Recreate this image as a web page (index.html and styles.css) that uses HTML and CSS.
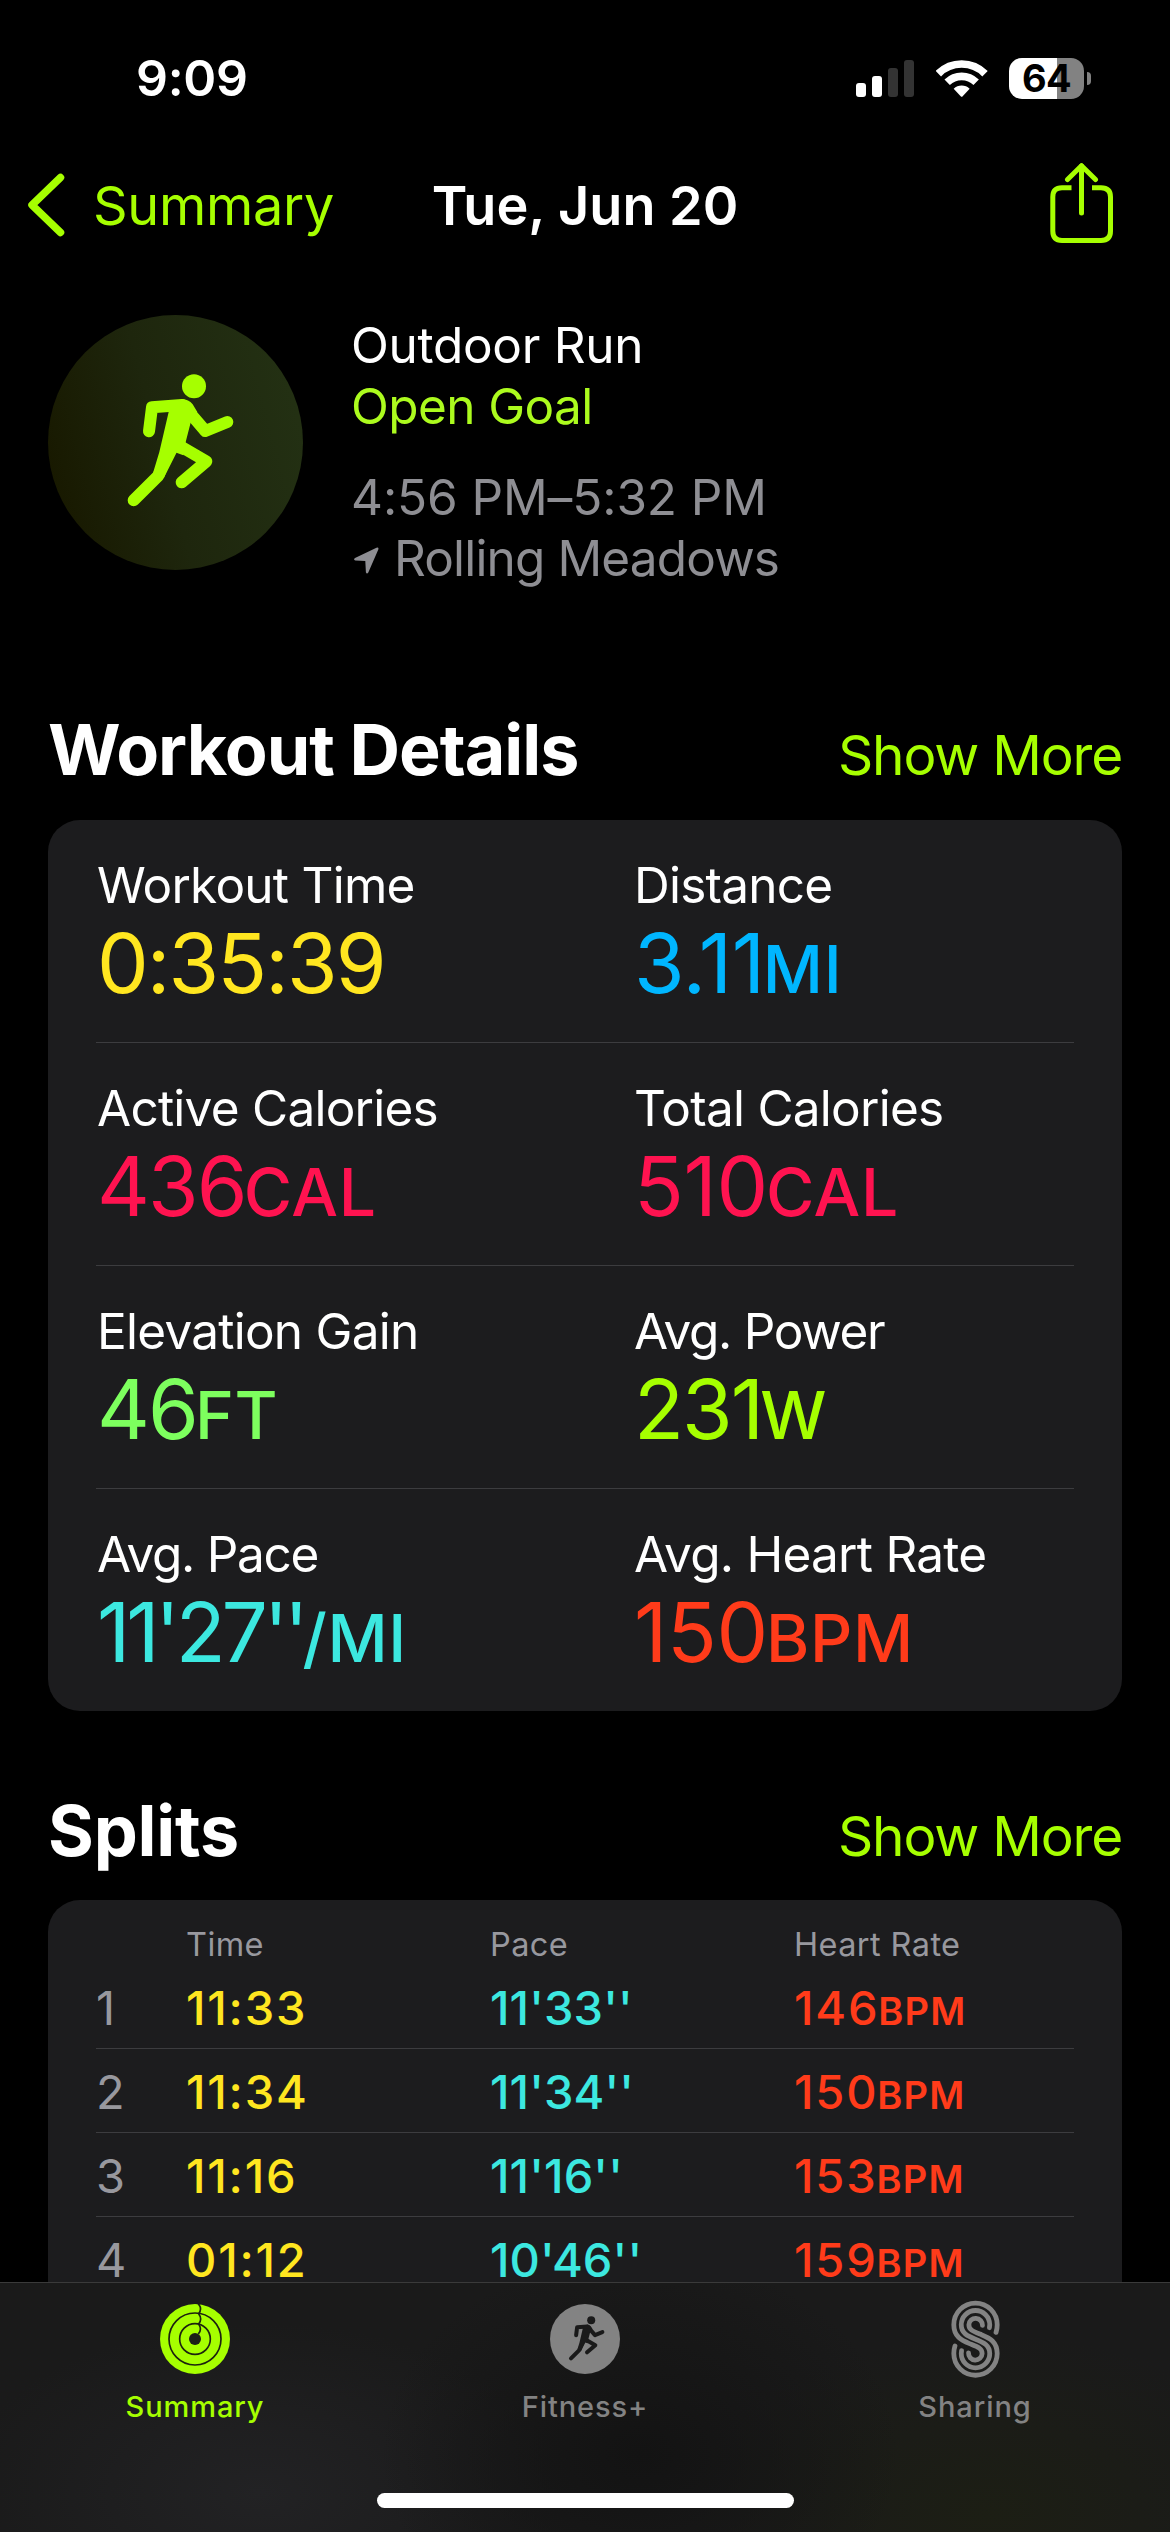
FILE: index.html
```html
<!DOCTYPE html>
<html lang="en">
<head>
    <meta charset="UTF-8">
    <meta name="viewport" content="width=device-width, initial-scale=1.0">
    <title>Tue, Jun 20 - Workout</title>
    <link rel="stylesheet" href="styles.css">
</head>
<body>
    <!-- Shared runner glyph -->
    <svg class="defs" width="0" height="0">
        <defs>
            <g id="runner" fill="none" stroke="currentColor" stroke-width="36" stroke-linecap="round" stroke-linejoin="round">
                <circle cx="462" cy="258" r="36" fill="currentColor" stroke="none"/>
                <path d="M327 393 L336 321 L426 314"/>
                <path d="M436 322 L496 392 L562 365"/>
                <path d="M398 440 L355 526 L281 600"/>
                <path d="M418 436 L499 483 L425 546"/>
                <path d="M386 325 L426 296 Q446 297 458 312 L472 335 L453 363 L438 421 L430 465 L403 455 L372 532 L339 518 L358 455 L386 335 Z" fill="currentColor" stroke="none"/>
            </g>
        </defs>
    </svg>

    <div class="status-bar">
        <div class="clock">9:09</div>
        <div class="status-icons">
            <div class="signal">
                <span class="bar bar-1"></span>
                <span class="bar bar-2"></span>
                <span class="bar bar-3 off"></span>
                <span class="bar bar-4 off"></span>
            </div>
            <svg class="wifi" viewBox="288 57 156 111">
                <g fill="none" stroke="#fff" stroke-width="23">
                    <path d="M295 98 A99 99 0 0 1 435 98"/>
                    <path d="M321.500 124 A62 62 0 0 1 408.500 124"/>
                </g>
                <path d="M341 143 A35 35 0 0 1 389 143 L368 166 Q365 169 362 166 Z" fill="#fff"/>
            </svg>
            <div class="battery">
                <div class="battery-level">64</div>
                <div class="battery-cap"></div>
            </div>
        </div>
    </div>

    <header class="nav">
        <div class="back">
            <svg class="chevron" viewBox="0 0 38 64">
                <path d="M33.500 4.500 L5 32 L33.500 59.500" fill="none" stroke="currentColor" stroke-width="7.500" stroke-linecap="round" stroke-linejoin="round"/>
            </svg>
            <span>Summary</span>
        </div>
        <h1>Tue, Jun 20</h1>
        <svg class="share" viewBox="0 0 64 81">
            <g fill="none" stroke="currentColor" stroke-width="5" stroke-linecap="round" stroke-linejoin="round">
                <path d="M31.500 50 V3"/>
                <path d="M17.500 16.500 L31.500 2.700 L45.500 16.500"/>
                <path d="M21.500 24.700 H12 Q2.800 24.700 2.800 34 V68 Q2.800 77.500 12 77.500 H51 Q60.500 77.500 60.500 68 V34 Q60.500 24.700 51 24.700 H42" stroke-linecap="butt"/>
            </g>
        </svg>
    </header>

    <main>
        <section class="hero">
            <div class="badge">
                <svg viewBox="24 44 765 765"><use href="#runner"/></svg>
            </div>
            <div class="hero-text">
                <div class="activity">Outdoor Run</div>
                <div class="goal">Open Goal</div>
                <div class="hours">4:56 PM–5:32 PM</div>
                <div class="place">
                    <svg viewBox="0 0 25 27">
                        <path d="M22.500 .7 Q25 0 24.300 2.600 L14.300 25.500 Q12.800 27.500 11.900 25.200 L11.300 14 L1.300 13.600 Q-1 12.600 1 11 Z" fill="currentColor"/>
                    </svg>
                    <span>Rolling Meadows</span>
                </div>
            </div>
        </section>

        <section class="details">
            <div class="section-head">
                <h2>Workout Details</h2>
                <a class="more">Show More</a>
            </div>
            <div class="card">
                <div class="detail-row">
                    <div class="detail">
                        <div class="label">Workout Time</div>
                        <div class="value narrow yellow">0:35:39</div>
                    </div>
                    <div class="detail">
                        <div class="label">Distance</div>
                        <div class="value blue">3.11<span class="unit">MI</span></div>
                    </div>
                </div>
                <div class="detail-row">
                    <div class="detail">
                        <div class="label">Active Calories</div>
                        <div class="value narrow pink">436<span class="unit">CAL</span></div>
                    </div>
                    <div class="detail">
                        <div class="label">Total Calories</div>
                        <div class="value pink">510<span class="unit">CAL</span></div>
                    </div>
                </div>
                <div class="detail-row">
                    <div class="detail">
                        <div class="label">Elevation Gain</div>
                        <div class="value narrow green">46<span class="unit">FT</span></div>
                    </div>
                    <div class="detail">
                        <div class="label tight">Avg. Power</div>
                        <div class="value narrow lime">231<span class="unit">W</span></div>
                    </div>
                </div>
                <div class="detail-row">
                    <div class="detail">
                        <div class="label tight">Avg. Pace</div>
                        <div class="value pace cyan">11'27''<span class="unit">/MI</span></div>
                    </div>
                    <div class="detail">
                        <div class="label">Avg. Heart Rate</div>
                        <div class="value red">150<span class="unit">BPM</span></div>
                    </div>
                </div>
            </div>
        </section>

        <section class="splits">
            <div class="section-head">
                <h2>Splits</h2>
                <a class="more">Show More</a>
            </div>
            <div class="card">
                <div class="split-head">
                    <span></span>
                    <span>Time</span>
                    <span>Pace</span>
                    <span>Heart Rate</span>
                </div>
                <div class="split-row">
                    <span class="index">1</span>
                    <span class="yellow">11:33</span>
                    <span class="split-pace cyan">11'33''</span>
                    <span class="red">146<span class="unit">BPM</span></span>
                </div>
                <div class="split-row">
                    <span class="index">2</span>
                    <span class="yellow">11:34</span>
                    <span class="split-pace cyan">11'34''</span>
                    <span class="red">150<span class="unit">BPM</span></span>
                </div>
                <div class="split-row">
                    <span class="index">3</span>
                    <span class="yellow">11:16</span>
                    <span class="split-pace cyan">11'16''</span>
                    <span class="red">153<span class="unit">BPM</span></span>
                </div>
                <div class="split-row">
                    <span class="index">4</span>
                    <span class="yellow">01:12</span>
                    <span class="split-pace cyan">10'46''</span>
                    <span class="red">159<span class="unit">BPM</span></span>
                </div>
            </div>
        </section>
    </main>

    <nav class="tab-bar">
        <div class="tabs">
            <div class="tab active">
                <svg class="round-icon" viewBox="180 102 210 210">
                    <circle cx="285" cy="207" r="105" fill="currentColor"/>
                    <g fill="none" stroke="#1c230f" stroke-width="5">
                        <circle cx="285" cy="207" r="78"/>
                        <circle cx="285" cy="207" r="46"/>
                        <path d="M294 100 Q308 116 296 131 Q308 147 296 162 Q307 178 295 192"/>
                    </g>
                    <circle cx="285" cy="207" r="18" fill="#1c1f17"/>
                </svg>
                <span>Summary</span>
            </div>
            <div class="tab">
                <svg class="round-icon" viewBox="93 113 627 627">
                    <circle cx="406.500" cy="426.500" r="313.500" fill="currentColor"/>
                    <use href="#runner" class="dark-runner"/>
                </svg>
                <span>Fitness+</span>
            </div>
            <div class="tab">
                <svg class="sharing-icon" viewBox="203 85 160 246">
                    <g fill="none" stroke="currentColor" stroke-width="14.500" stroke-linecap="round">
                        <path d="M345 188 Q348.500 178 348.500 165 A65.500 65.500 0 0 0 217.500 165 C217.500 200 240 212 265 222 S303 236 303 252 A20 20 0 0 1 262 250"/>
                        <path d="M325 174 L326 165 A43 43 0 0 0 240 165 C240 190 258 199 283 208.500 S326 228 326 252 A43 43 0 0 1 240 252 L241 243"/>
                        <path d="M304 167 A20 20 0 0 0 263 165 C263 181 276 185 301 195 S348.500 217 348.500 252 A65.500 65.500 0 0 1 217.500 252 Q217.500 239 221 229"/>
                    </g>
                </svg>
                <span>Sharing</span>
            </div>
        </div>
        <div class="home-indicator"></div>
    </nav>
</body>
</html>
```

FILE: styles.css
```css
* {
    box-sizing: border-box;
}
body {
    font-family: Inter, "Liberation Sans", sans-serif;
    margin: 0;
    width: 1170px;
    height: 2532px;
    overflow: hidden;
    background-color: #000;
    color: #fff;
}
.defs {
    position: absolute;
}

/* Status bar */
.status-bar {
    display: flex;
    justify-content: space-between;
    align-items: center;
    height: 144px;
    padding: 48px 79px 36px 136px;
}
.clock {
    font-size: 50px;
    line-height: 60px;
    font-weight: 600;
    letter-spacing: -0.3px;
}
.status-icons {
    display: flex;
    align-items: center;
}
.signal {
    display: flex;
    align-items: flex-end;
    gap: 6px;
    height: 37px;
    margin-right: 22px;
}
.bar {
    width: 10px;
    border-radius: 3px;
    background-color: #fff;
}
.bar.off {
    background-color: #333;
}
.bar-1 {
    height: 14px;
}
.bar-2 {
    height: 21px;
}
.bar-3 {
    height: 29px;
}
.bar-4 {
    height: 37px;
}
.wifi {
    width: 52px;
    height: 37px;
    margin-right: 21px;
}
.battery {
    display: flex;
    align-items: center;
    gap: 3px;
}
.battery-level {
    width: 75px;
    height: 41px;
    border-radius: 13px;
    background: linear-gradient(to right, #fff 64%, #828282 64%);
    color: #000;
    font-size: 38px;
    line-height: 41px;
    font-weight: 700;
    letter-spacing: -0.6px;
    text-align: center;
}
.battery-cap {
    width: 4px;
    height: 13px;
    border-radius: 0 5px 5px 0;
    background-color: #828282;
}

/* Navigation */
.nav {
    display: grid;
    grid-template-columns: 1fr auto 1fr;
    align-items: center;
    height: 122px;
    padding: 0 56px 0 27px;
    font-size: 54px;
}
.nav h1 {
    margin: 0 0 0 29px;
    font-size: 54px;
    font-weight: 600;
}
.back {
    display: flex;
    align-items: center;
    color: #a6ff00;
    letter-spacing: -0.3px;
}
.chevron {
    width: 38px;
    height: 64px;
    margin-right: 28px;
}
.share {
    width: 64px;
    height: 81px;
    margin-bottom: 4px;
    justify-self: end;
    color: #a6ff00;
}

/* Workout summary */
main {
    padding: 49px 48px 0;
}
.hero {
    display: flex;
    align-items: flex-start;
    gap: 48px;
    font-size: 49.5px;
    line-height: 61px;
}
.badge {
    width: 255px;
    height: 255px;
    border-radius: 50%;
    background: linear-gradient(75deg, #181900 8%, #1e260d 45%, #233013 90%);
    color: #a6ff00;
}
.badge svg {
    display: block;
}
.activity {
    letter-spacing: -0.3px;
}
.goal {
    color: #acfb1e;
    letter-spacing: -0.6px;
    margin-bottom: 30px;
}
.hours {
    color: #8e8e93;
    letter-spacing: -0.1px;
}
.place {
    display: flex;
    align-items: center;
    gap: 15px;
    padding-left: 3px;
    color: #8e8e93;
    letter-spacing: -0.85px;
}
.place svg {
    width: 25px;
    height: 27px;
    margin-top: 4px;
}

/* Sections */
.section-head {
    display: flex;
    justify-content: space-between;
    align-items: baseline;
}
.section-head h2 {
    margin: 0;
    font-size: 70px;
    line-height: 84px;
    font-weight: 700;
    letter-spacing: -1px;
}
.more {
    color: #a6ff00;
    font-size: 55px;
    letter-spacing: -1.2px;
}
.card {
    background-color: #1c1c1e;
    border-radius: 32px;
    padding: 0 48px;
}
.details {
    margin-top: 119px;
}
.details .card {
    margin-top: 28px;
}
.splits {
    margin-top: 78px;
}
.splits .card {
    margin-top: 27px;
    padding-bottom: 30px;
}
.section-head + .card {
    overflow: hidden;
}
.splits h2 {
    letter-spacing: -0.2px;
}

/* Workout details */
.detail-row {
    display: grid;
    grid-template-columns: 537px 1fr;
    height: 223px;
    padding-top: 35px;
    border-bottom: 1px solid #3c3c3f;
}
.detail-row:last-child {
    height: 222px;
    border-bottom: none;
}
.detail {
    padding-left: 1px;
}
.label {
    font-size: 49.5px;
    line-height: 61px;
    letter-spacing: -0.75px;
    margin-bottom: 3px;
}
.label.tight {
    letter-spacing: -1.3px;
}
.value {
    font-size: 82px;
    line-height: 90px;
    letter-spacing: -0.3px;
}
.value.narrow {
    letter-spacing: -1.9px;
}
.value .unit {
    font-size: 66px;
    font-weight: 500;
    letter-spacing: 0.6px;
    margin-left: -2px;
}
.value.pace {
    letter-spacing: -4.2px;
}
.yellow {
    color: #ffe620;
}
.blue {
    color: #00b6ff;
}
.pink {
    color: #ff1350;
}
.green {
    color: #7dff5e;
}
.lime {
    color: #a6ff00;
}
.cyan {
    color: #3ce8e0;
}
.red {
    color: #ff3b1a;
}

/* Splits */
.split-head,
.split-row {
    display: grid;
    grid-template-columns: 90px 304px 304px 1fr;
}
.split-head {
    height: 65px;
    padding-top: 25px;
    color: #98989e;
    font-size: 32.5px;
    line-height: 40px;
    letter-spacing: 0.4px;
}
.split-row {
    height: 84px;
    padding-top: 14px;
    border-bottom: 1px solid #3c3c3f;
    font-size: 47px;
    line-height: 57px;
    font-weight: 500;
    letter-spacing: 1.8px;
}
.split-row:last-child {
    border-bottom: none;
}
.split-row .index {
    color: #98989e;
    font-weight: 400;
}
.split-row .split-pace {
    letter-spacing: 0.1px;
}
.split-row .unit {
    font-size: 38px;
    font-weight: 600;
    letter-spacing: 1.2px;
    margin-left: -1px;
}

/* Tab bar */
.tab-bar {
    position: fixed;
    left: 0;
    bottom: 0;
    width: 1170px;
    height: 250px;
    border-top: 1px solid #3a3a3a;
    background:
        radial-gradient(ellipse 260px 200px at 640px 170px, #131313 0%, rgba(19, 19, 19, 0) 100%),
        radial-gradient(ellipse 300px 180px at 990px 230px, #1c1e14 0%, rgba(28, 30, 20, 0) 100%),
        radial-gradient(ellipse 300px 170px at 260px 210px, #222224 0%, rgba(34, 34, 36, 0) 100%),
        #1a1a1a;
}
.tabs {
    display: grid;
    grid-template-columns: repeat(3, 1fr);
}
.tab {
    display: flex;
    flex-direction: column;
    align-items: center;
    color: #838383;
    padding-top: 15px;
    font-size: 29px;
    line-height: 36px;
    font-weight: 500;
    letter-spacing: 0.9px;
}
.tab.active {
    color: #a6ff00;
}
.round-icon {
    width: 70px;
    height: 70px;
    margin: 6px 0 15px;
}
.sharing-icon {
    width: 53px;
    height: 82px;
    margin-bottom: 9px;
}
.dark-runner {
    color: #1a1a1a;
}
.home-indicator {
    width: 417px;
    height: 15px;
    margin: 68px auto 0;
    border-radius: 8px;
    background-color: #fff;
}
```
